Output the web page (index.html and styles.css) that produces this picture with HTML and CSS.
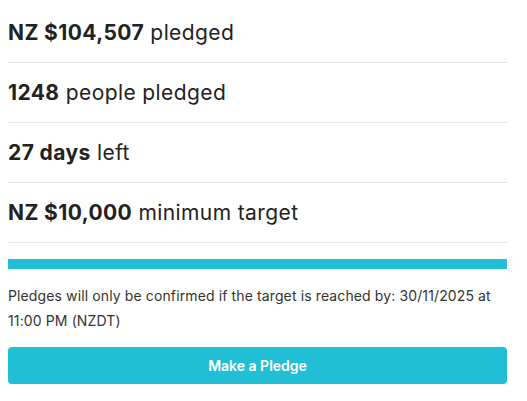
FILE: index.html
```html
<!DOCTYPE html>
<html>
<head>
<meta charset="utf-8">
<link rel="stylesheet" href="styles.css">
</head>
<body>
<div class="panel">
  <div class="stat"><strong>NZ $104,507</strong>&nbsp;pledged</div>
  <div class="stat"><strong>1248</strong>&nbsp;people pledged</div>
  <div class="stat"><strong>27 days</strong>&nbsp;left</div>
  <div class="stat"><strong>NZ $10,000</strong>&nbsp;minimum target</div>
  <div class="progress"><div class="progress-fill"></div></div>
  <p class="note">Pledges will only be confirmed if the target is reached by: 30/11/2025 at 11:00 PM (NZDT)</p>
  <button class="pledge">Make a Pledge</button>
</div>
</body>
</html>
```
FILE: styles.css
```css
html, body {
  margin: 0;
  padding: 0;
  background: #ffffff;
}
body {
  padding: 3px 20px 0 8px;
  font-family: Inter, "Liberation Sans", sans-serif;
  color: #222222;
}
.panel {
  width: 499px;
}
.stat {
  height: 60px;
  box-sizing: border-box;
  border-bottom: 1px solid #e5e5e5;
  display: flex;
  align-items: center;
  font-size: 21px;
  letter-spacing: 0.4px;
  padding-bottom: 1px;
}
.stat strong {
  font-weight: 700;
}
.progress {
  margin-top: 16px;
  height: 10px;
  background: #e5e5e5;
}
.progress-fill {
  height: 100%;
  width: 100%;
  background: #20bfd5;
}
.note {
  margin: 14px 0 0;
  font-size: 14px;
  letter-spacing: 0.12px;
  line-height: 25px;
  color: #333333;
}
.pledge {
  display: block;
  margin-top: 14px;
  width: 100%;
  height: 37px;
  border: none;
  border-radius: 4px;
  background: #20bfd5;
  color: #ffffff;
  font-family: Inter, "Liberation Sans", sans-serif;
  font-size: 14px;
  font-weight: 600;
  cursor: pointer;
}
```
